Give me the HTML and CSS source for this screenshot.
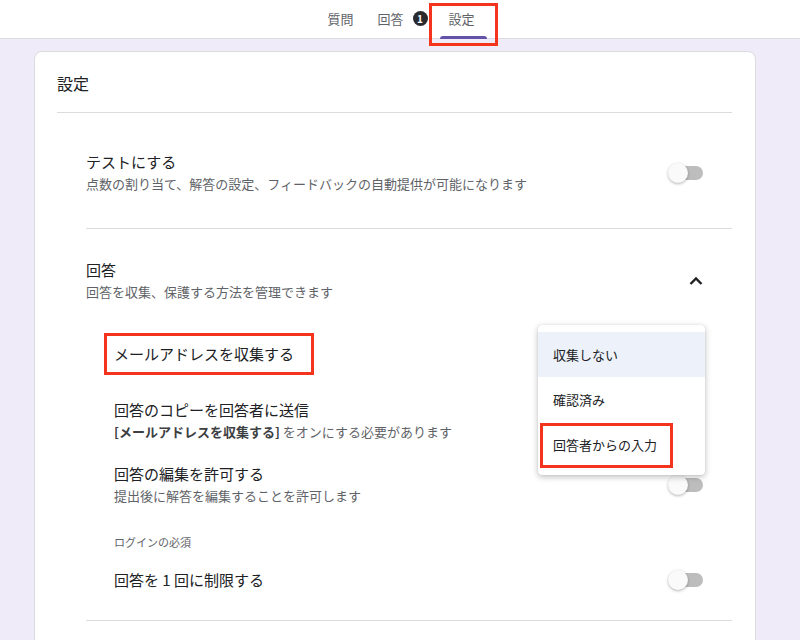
FILE: index.html
```html
<!DOCTYPE html>
<html lang="ja">
<head>
    <meta charset="UTF-8">
    <meta name="viewport" content="width=device-width, initial-scale=1.0">
    <title>設定</title>
    <link rel="stylesheet" href="styles.css">
</head>
<body>

    <header class="topbar">
        <nav class="tabs">
            <a class="tab">質問</a>
            <a class="tab tab-count">回答<span class="badge">1</span></a>
            <a class="tab tab-active callout callout-tab">設定</a>
        </nav>
    </header>

    <main class="card">
        <h1 class="card-title">設定</h1>

        <section class="setting setting-quiz">
            <div class="row">
                <div class="text">
                    <div class="title">テストにする</div>
                    <div class="desc">点数の割り当て、解答の設定、フィードバックの自動提供が可能になります</div>
                </div>
                <span class="switch"></span>
            </div>
        </section>

        <section class="setting setting-responses">
            <div class="row">
                <div class="text">
                    <div class="title">回答</div>
                    <div class="desc">回答を収集、保護する方法を管理できます</div>
                </div>
                <svg class="chevron" width="24" height="24" viewBox="0 0 24 24">
                    <polyline points="6.5,15 12,9.5 17.5,15" fill="none" stroke="#202124" stroke-width="2.4"/>
                </svg>
            </div>

            <div class="sub">
                <div class="row row-mail">
                    <span class="title callout callout-mail">メールアドレスを収集する</span>

                    <ul class="menu">
                        <li class="menu-item menu-item-selected">収集しない</li>
                        <li class="menu-item">確認済み</li>
                        <li class="menu-item"><span class="callout callout-input">回答者からの入力</span></li>
                    </ul>
                </div>

                <div class="row row-copy">
                    <div class="text">
                        <div class="title">回答のコピーを回答者に送信</div>
                        <div class="desc"><b>[メールアドレスを収集する]</b> をオンにする必要があります</div>
                    </div>
                </div>

                <div class="row row-edit">
                    <div class="text">
                        <div class="title">回答の編集を許可する</div>
                        <div class="desc">提出後に解答を編集することを許可します</div>
                    </div>
                    <span class="switch"></span>
                </div>

                <div class="group-label">ログインの必須</div>

                <div class="row row-limit">
                    <div class="title">回答を 1 回に制限する</div>
                    <span class="switch"></span>
                </div>
            </div>
        </section>
    </main>

</body>
</html>
```

FILE: styles.css
```css
*{
    box-sizing: border-box;
}

body{
    margin: 0;
    background-color: #efebf8;
    font-family: "Noto Sans CJK JP", "Noto Sans", sans-serif;
    color: #202124;
    min-height: 100vh;
}

/* top tabs */
.topbar{
    height: 39px;
    background-color: white;
    border-bottom: 1px solid #dadce0;
    display: flex;
    justify-content: center;
}
.tabs{
    display: flex;
    padding-left: 2px;
}
.tab{
    display: flex;
    align-items: center;
    padding: 0 12px 2px;
    font-size: 13px;
    color: #5f6368;
    position: relative;
}
.tab-count{
    padding-right: 9px;
}
.tab-active::before{
    content: '';
    position: absolute;
    left: 3px;
    right: 0;
    bottom: -1px;
    height: 3px;
    border-radius: 3px 3px 0 0;
    background-color: #6352a8;
}
.badge{
    margin-left: 9px;
    width: 15px;
    height: 15px;
    border-radius: 50%;
    background-color: #2a2b2e;
    color: white;
    font-size: 10px;
    font-weight: 700;
    display: flex;
    align-items: center;
    justify-content: center;
}

/* red callout boxes */
.callout{
    position: relative;
}
.callout::after{
    content: '';
    position: absolute;
    border: 3px solid #f5341e;
}
.callout-tab::after{
    left: -8px;
    right: -11px;
    top: 3px;
    bottom: -8px;
}
.callout-mail::after{
    left: -10px;
    right: -20px;
    top: -9px;
    bottom: -9px;
}
.callout-input::after{
    left: -13px;
    right: -16px;
    top: -12px;
    bottom: -13px;
}

/* card */
.card{
    margin: 12px 0 0 34px;
    width: 722px;
    background-color: white;
    border: 1px solid #dadce0;
    border-radius: 8px;
    padding: 0 23px 40px 22px;
}
.card-title{
    margin: 0;
    padding: 19px 0 17px;
    font-size: 16px;
    font-weight: 400;
    line-height: 24px;
    border-bottom: 1px solid #dadce0;
}

.setting{
    margin-left: 29px;
    border-bottom: 1px solid #dadce0;
    padding-right: 29px;
}
.setting-quiz{
    padding-top: 38px;
    padding-bottom: 33px;
}
.setting-responses{
    padding-top: 30px;
    padding-bottom: 29px;
}

.row{
    display: flex;
    align-items: center;
    justify-content: space-between;
}
.title{
    font-size: 15px;
    line-height: 22px;
}
.desc{
    font-size: 13px;
    line-height: 22px;
    color: #5f6368;
}
.desc b{
    color: #3c4043;
}
.chevron{
    margin-right: -5px;
}

/* switch */
.switch{
    position: relative;
    width: 35px;
    height: 22px;
    flex-shrink: 0;
}
.switch::before{
    content: '';
    position: absolute;
    left: 8px;
    right: 0;
    top: 4px;
    height: 14px;
    border-radius: 7px;
    background-color: #bdbdbd;
}
.switch::after{
    content: '';
    position: absolute;
    left: 0;
    top: 1px;
    width: 20px;
    height: 20px;
    border-radius: 50%;
    background-color: #fafafa;
    box-shadow: 0 1px 3px rgba(0,0,0,0.3);
}

/* responses sub list */
.sub{
    padding-left: 28px;
}
.row-mail{
    position: relative;
    margin-top: 27px;
    height: 48px;
}
.row-mail .title{
    line-height: 24px;
}
.row-copy{
    margin-top: 21px;
}
.row-edit{
    margin-top: 20px;
}
.group-label{
    margin-top: 27px;
    font-size: 11px;
    line-height: 16px;
    color: #5f6368;
}
.row-limit{
    margin-top: 19px;
}

/* dropdown menu */
.menu{
    position: absolute;
    right: -2px;
    top: -5px;
    width: 167px;
    margin: 0;
    padding: 7px 0 8px;
    list-style-type: none;
    background-color: white;
    border-radius: 4px;
    box-shadow: 0 2px 6px rgba(0,0,0,0.25), 0 0 1px rgba(0,0,0,0.2);
    z-index: 2;
}
.menu-item{
    height: 45px;
    display: flex;
    align-items: center;
    padding-left: 15px;
    font-size: 13px;
    line-height: 20px;
}
.menu-item-selected{
    background-color: #edf2fa;
}
```
